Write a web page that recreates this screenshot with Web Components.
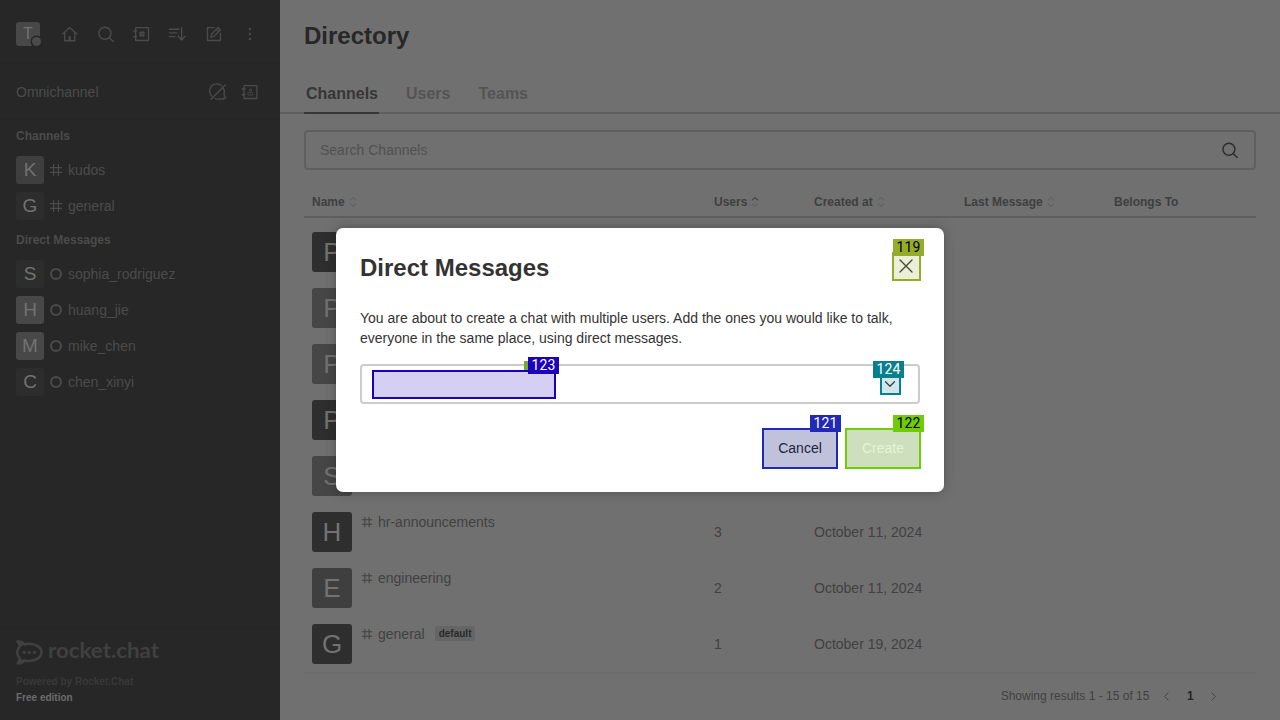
<!DOCTYPE html>
<html lang="en">
<head>
<meta charset="utf-8">
<title>Directory</title>
<style>
html,body{margin:0;width:1280px;height:720px;overflow:hidden}
body{font:14px/20px "Liberation Sans",Arial,sans-serif}
</style>
</head>
<body>
<chat-app></chat-app>
<script>
const define=(name,render)=>customElements.define(name,class extends HTMLElement{
  connectedCallback(){
    if(this.shadowRoot)return;
    this.attachShadow({mode:'open'}).innerHTML=render(k=>this.getAttribute(k)||'',this);
  }
});

const ICONS={
home:'<path d="M2.6 9.9 9.7 3.5l7.2 6.4"/><path d="M4.7 8.3v8.4h10.1V8.3"/><path d="M9.7 13v3.4" stroke-width="2.2"/>',
search:'<circle cx="8.9" cy="9.2" r="6"/><path d="m13.2 13.6 4 3.8"/>',
book:'<rect x="3.6" y="3.6" width="12.9" height="12.9" rx=".5"/><path d="M1.9 7h2.6M1.9 12.7h2.6"/><path d="M8.9 7.4v5.2M11.1 7.4v5.2M7.4 8.9h5.2M7.4 11.1h5.2" stroke-width="1.1"/>',
sort:'<path d="M1.4 5.2h9.4M1.4 8.9h7.4M1.4 12.6h5.6M13.6 3.7v12.2M10.2 12.3l3.4 3.7 3.4-3.7"/>',
edit:'<path d="M10 3.6H3.5v12.9h12.9v-7"/><path d="m7 13 .6-3L14 3.6l2.4 2.3L10 12.3zM12.5 5.2l2.3 2.2"/>',
kebab:'<g fill="currentColor" stroke="none"><circle cx="9.9" cy="4.9" r="1.2"/><circle cx="9.9" cy="9.9" r="1.2"/><circle cx="9.9" cy="14.9" r="1.2"/></g>',
off:'<path d="M15.600 6.300a7 7 0 0 1 .4 5.900l1.600 3.500-1.900.5.400 1-4.600-.4a7 7 0 0 1-4.600-.3M4 14.200A7 7 0 0 1 13.400 3.700"/><path d="M3 17.200 17.200 3"/>',
contacts:'<rect x="4" y="3.600" width="12.900" height="12.900" rx=".5"/><path d="M2.300 7h2.600M2.300 12.700h2.600"/><circle cx="10.400" cy="8.100" r="1.100" stroke-width=".9"/><path d="M7.900 12.600v-1q0-1 1-1h3q1 0 1 1v1z" stroke-width=".9"/>',
hash:'<path d="M7.300 4v12M12.700 4v12M4 7.300h12M4 12.700h12"/>',
sorter:'<path d="m6.500 7.800 3.500-3.300 3.500 3.300"/><path d="m6.500 12.200 3.500 3.300 3.500-3.300" stroke="var(--low,currentColor)"/>',
close:'<path d="m4 4 12 12M16 4 4 16"/>',
down:'<path d="m5 7.500 5 5 5-5"/>',
left:'<path d="M12.500 4.500 7 10l5.500 5.500"/>',
right:'<path d="M7.500 4.500 13 10l-5.500 5.500"/>'
};
define('chat-icon',a=>`<style>:host{display:block;width:${a('size')||20}px;height:${a('size')||20}px;flex:none}svg{display:block}</style>
<svg width="${a('size')||20}" height="${a('size')||20}" viewBox="0 0 20 20" fill="none" stroke="currentColor" stroke-width="${a('weight')||1.35}" stroke-linecap="round" stroke-linejoin="round">${ICONS[a('name')]}</svg>`);

define('chat-avatar',a=>`<style>:host{display:flex;align-items:center;justify-content:center;flex:none;box-sizing:border-box;padding-bottom:${a('lift')||0}px;width:${a('size')}px;height:${a('size')}px;border-radius:3px;background:${a('tone')};color:#727272;font-size:${a('font')}px;line-height:1}</style><slot></slot>`);

define('room-item',a=>`<style>
:host{display:flex;align-items:center;height:36px;padding-left:16px;color:#4b4b4b}
.s{width:16px;height:16px;margin:0 4px;display:flex;align-items:center;justify-content:center}
i{width:8px;height:8px;border:2px solid #4b4b4b;border-radius:50%}
</style><chat-avatar size="28" font="19" lift="1" tone="${a('tone')}">${a('letter')}</chat-avatar>
<span class="s">${a('dm')?'<i></i>':'<chat-icon name="hash" size="18" weight="1.3"></chat-icon>'}</span><slot></slot>`);

define('brand-logo',()=>`<style>:host{display:flow-root;height:26px}svg{display:block;margin-top:-6px}</style>
<svg width="170" height="38" viewBox="0 -6 170 38"><g fill="none" stroke="#404040" stroke-width="2.600" stroke-linejoin="round"><path d="M1.500 1.500c3.300-.2 5.500.9 7 2.900C17 2.400 25.500 6 25.500 12.300S17 22.300 8.600 20.400C7 22.500 5 23.500 1.600 23.300c1.900-2 2.300-3.700 1.900-5.600-2.800-3.300-2.800-7.500 0-10.900.4-1.900-.2-3.600-2-5.300z"/></g><g fill="#404040"><path d="M1 .6c4-.4 6.500 1 8 3.300L4.500 7C4.500 4.500 3 2.500 1 .6zM1 24c2.500-2 3-4 2.500-6L9 21c-1.500 2-4 3.500-8 3z"/><circle cx="8.200" cy="12.400" r="1.600"/><circle cx="13.300" cy="12.400" r="1.600"/><circle cx="18.400" cy="12.400" r="1.600"/></g>
<text x="32" y="17.900" font-family="Lato,sans-serif" font-weight="700" font-size="21.500" fill="#404040" textLength="111" lengthAdjust="spacingAndGlyphs">rocket.chat</text></svg>`);

define('chat-sidebar',()=>`<style>
:host{display:flex;flex-direction:column;width:280px;height:720px;background:#272727;color:#4b4b4b}
.top{border-bottom:2px solid #252525;display:flex;align-items:center;padding:5px 0 0 16px;height:57px}
.me{position:relative;margin-right:20px}
.me i{position:absolute;left:15.5px;top:15.5px;width:9px;height:9px;border-radius:50%;background:#4b4b4b;box-shadow:0 0 0 1.500px #272727}
.icons{display:flex;gap:16px}
.omni{display:flex;align-items:center;height:52px;padding:2px 20px 0 16px;border-bottom:2px solid #252525;gap:12px}
.omni span{flex:1}
h4{margin:0;padding-left:16px;height:32px;line-height:32px;font-size:12px}
.foot{margin-top:auto;border-top:2px solid #252525;height:80px;padding:12px 16px 0;font-size:10px;font-weight:700;line-height:16px;color:#393939}
.foot b{display:block;color:#6c6c6c}
.foot p{margin:8px 0 0}
</style>
<div class="top"><div class="me"><chat-avatar size="24" font="16" tone="#484848">T</chat-avatar><i></i></div>
<div class="icons">${['home','search','book','sort','edit','kebab'].map(n=>`<chat-icon name="${n}"></chat-icon>`).join('')}</div></div>
<div class="omni"><span>Omnichannel</span><chat-icon name="off"></chat-icon><chat-icon name="contacts"></chat-icon></div>
<h4>Channels</h4>
<room-item letter="K" tone="#3f3f3f">kudos</room-item>
<room-item letter="G" tone="#2d2d2d">general</room-item>
<h4>Direct Messages</h4>
<room-item dm="1" letter="S" tone="#2d2d2d">sophia_rodriguez</room-item>
<room-item dm="1" letter="H" tone="#484848">huang_jie</room-item>
<room-item dm="1" letter="M" tone="#484848">mike_chen</room-item>
<room-item dm="1" letter="C" tone="#2d2d2d">chen_xinyi</room-item>
<div class="foot"><brand-logo></brand-logo><p>Powered by Rocket.Chat</p><b>Free edition</b></div>`);

define('head-cell',a=>`<style>:host{display:flex;align-items:center;padding-left:8px;font-size:12px;font-weight:700;color:#3f3f3f}
.o{display:flex;color:#626262}.up{color:#404040;--low:#606060}</style><slot></slot>${a('sort')?`<span class="o ${a('sort')}"><chat-icon name="sorter" size="16" weight="1.300"></chat-icon></span>`:''}`);

define('channel-row',a=>`<style>
:host{display:grid;grid-template-columns:402px 100px 150px 150px 150px;height:56px;color:#414141}
div{padding:8px;display:flex;align-items:center;box-sizing:border-box;font-kerning:none}
.n{align-items:flex-start;padding-right:0}
.t{display:flex;align-items:center;height:20px;margin-left:7px}
chat-icon{margin-right:3px}
b{margin:-1px 0 0 10px;height:15px;line-height:15px;padding:0 4px;border-radius:2px;background:#656565;color:#2a2a2a;font-size:10px}
</style><div class="n"><chat-avatar size="40" font="26" tone="${a('tone')}">${a('letter')}</chat-avatar><span class="t"><chat-icon name="hash" size="16" weight="1.300"></chat-icon><slot></slot>${a('badge')?`<b>${a('badge')}</b>`:''}</span></div><div>${a('users')}</div><div>${a('date')}</div>`);

define('directory-page',()=>`<style>
:host{display:flex;flex-direction:column;width:1000px;height:720px;background:#707070}
h1{margin:0;font-size:24px;line-height:32px;padding:20px 24px 22px;color:#272727}
.tabs{display:flex;gap:24px;height:38px;padding:0 24px;border-bottom:2px solid #5f5f5f;font-size:16px;font-weight:700;color:#545454}
.tabs span{padding:0 2px;line-height:39px;height:38px}
.tabs .on{color:#363636;border-bottom:2px solid #363636;border-radius:1px;padding-right:1px;margin-right:1px}
.search{margin:16px 24px 0;height:36px;border:2px solid #5f5f5f;border-radius:4px;display:flex;align-items:center;padding:0 14px;color:#515151;justify-content:space-between}
.search chat-icon{color:#2b2b2b}
.tbl{margin:0 24px}
.h{display:grid;grid-template-columns:402px 100px 150px 150px 150px;height:28px;padding-top:18px;border-bottom:2px solid #5f5f5f;margin-bottom:6px}
.pg{margin:0 24px;border-top:2px solid #6b6b6b;height:44px;display:flex;align-items:center;justify-content:flex-end;font-size:12px;color:#414141}
.pg b{width:12px;text-align:center;margin:0 11px;color:#242424}
.pg span{margin-right:11px}
.pg i{width:35.6px}
</style>
<h1>Directory</h1>
<div class="tabs"><span class="on">Channels</span><span>Users</span><span>Teams</span></div>
<div class="search">Search Channels<chat-icon name="search"></chat-icon></div>
<div class="tbl"><div class="h"><head-cell sort="none">Name</head-cell><head-cell sort="up">Users</head-cell><head-cell sort="none">Created at</head-cell><head-cell sort="none">Last Message</head-cell><head-cell>Belongs To</head-cell></div>
<channel-row letter="P" tone="#2e2e2e"></channel-row>
<channel-row letter="P" tone="#464646"></channel-row>
<channel-row letter="P" tone="#464646"></channel-row>
<channel-row letter="P" tone="#2e2e2e"></channel-row>
<channel-row letter="S" tone="#464646"></channel-row>
<channel-row letter="H" tone="#2e2e2e" users="3" date="October 11, 2024">hr-announcements</channel-row>
<channel-row letter="E" tone="#3f3f3f" users="2" date="October 11, 2024">engineering</channel-row>
<channel-row letter="G" tone="#2e2e2e" users="1" date="October 19, 2024" badge="default">general</channel-row></div>
<div class="pg"><span>Showing results 1 - 15 of 15</span><chat-icon name="left" size="13" weight="1.500"></chat-icon><b>1</b><chat-icon name="right" size="13" weight="1.500"></chat-icon><i></i></div>`);

define('hint-mark',a=>{
  const [x,y,w,h]=a('box').split(' '),[lx,ly]=a('tag').split(' '),c=a('rgb');
  return `<style>:host{display:contents}
.b,.l{position:absolute;box-sizing:border-box}
.b{left:${x}px;top:${y}px;width:${w}px;height:${h}px;border:2px solid rgb(${c});background:rgba(${c},.19)}
.l{left:${lx}px;top:${ly}px;width:31px;height:17px;background:rgb(${c});color:${a('ink')};font:14px/17px Roboto,sans-serif;letter-spacing:.2px;text-align:center}
</style><div class="b"></div><div class="l">${a('label')}</div>`});

define('message-dialog',()=>`<style>
:host{position:absolute;left:336px;top:228px;width:608px;height:264px;box-sizing:border-box;padding:24px;background:#fff;border-radius:7px;box-shadow:0 0 2px rgba(47,52,61,.1),0 0 12px rgba(20,20,20,.3);color:#333;display:flex;flex-direction:column}
header{display:flex;align-items:center;justify-content:space-between;height:32px}
h2{margin:0;font-size:24px;line-height:32px}
header chat-icon{margin-right:4px;margin-top:-4px}
p{margin:24px 0 16px}
.in{height:36px;border:2px solid #cbcbcb;border-radius:4px;display:flex;align-items:center;justify-content:flex-end;padding-right:19px}
.act{display:flex;justify-content:flex-end;margin:24px -1px 0 0;gap:7px}
button{font:inherit;width:76px;height:40px;border:0;padding:0;border-radius:4px;background:#e6e6e6;color:#222}
.go{background:#e4e4e8;color:#fff}
</style>
<header><h2>Direct Messages</h2><chat-icon name="close"></chat-icon></header>
<p>You are about to create a chat with multiple users. Add the ones you would like to talk, everyone in the same place, using direct messages.</p>
<div class="in"><chat-icon name="down" size="18"></chat-icon></div>
<div class="act"><button>Cancel</button><button class="go">Create</button></div>`);

define('chat-app',()=>`<style>:host{display:flex;position:relative;width:1280px;height:720px;overflow:hidden}
.bit{position:absolute;left:524px;top:361px;width:5px;height:9px;background:#78ab2d}</style>
<chat-sidebar></chat-sidebar><directory-page></directory-page><message-dialog></message-dialog>
<div class="bit"></div>
<hint-mark box="892 252 29 29" tag="893 239" rgb="148,171,44" ink="#000" label="119"></hint-mark>
<hint-mark box="372 370 184 29" tag="528 357" rgb="28,0,190" ink="#fff" label="123"></hint-mark>
<hint-mark box="880 374 21 21" tag="873 361" rgb="8,127,143" ink="#fff" label="124"></hint-mark>
<hint-mark box="762 428 76 41" tag="810 415" rgb="34,42,181" ink="#fff" label="121"></hint-mark>
<hint-mark box="845 428 76 41" tag="893 415" rgb="112,204,8" ink="#000" label="122"></hint-mark>`);
</script>
</body>
</html>
